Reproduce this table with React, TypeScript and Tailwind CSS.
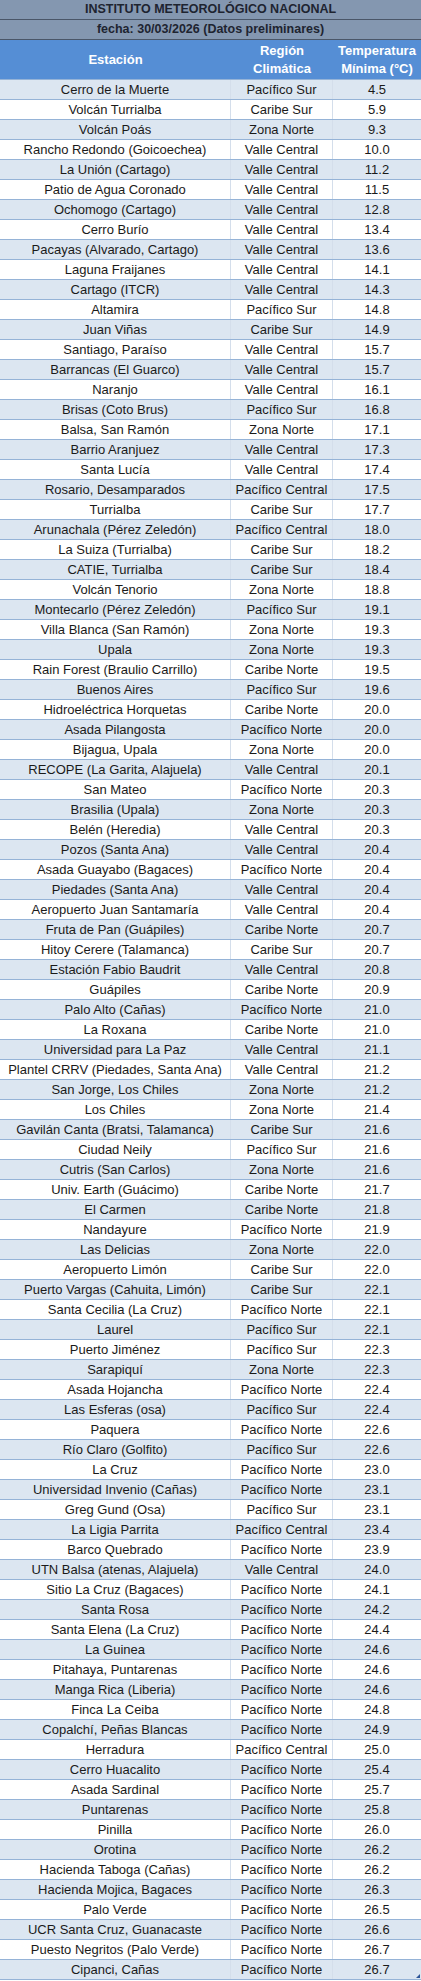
import React from "react";

const rows: [string, string, string][] = [
  ["Cerro de la Muerte", "Pacífico Sur", "4.5"],
  ["Volcán Turrialba", "Caribe Sur", "5.9"],
  ["Volcán Poás", "Zona Norte", "9.3"],
  ["Rancho Redondo (Goicoechea)", "Valle Central", "10.0"],
  ["La Unión (Cartago)", "Valle Central", "11.2"],
  ["Patio de Agua Coronado", "Valle Central", "11.5"],
  ["Ochomogo (Cartago)", "Valle Central", "12.8"],
  ["Cerro Burío", "Valle Central", "13.4"],
  ["Pacayas (Alvarado, Cartago)", "Valle Central", "13.6"],
  ["Laguna Fraijanes", "Valle Central", "14.1"],
  ["Cartago (ITCR)", "Valle Central", "14.3"],
  ["Altamira", "Pacífico Sur", "14.8"],
  ["Juan Viñas", "Caribe Sur", "14.9"],
  ["Santiago, Paraíso", "Valle Central", "15.7"],
  ["Barrancas (El Guarco)", "Valle Central", "15.7"],
  ["Naranjo", "Valle Central", "16.1"],
  ["Brisas (Coto Brus)", "Pacífico Sur", "16.8"],
  ["Balsa, San Ramón", "Zona Norte", "17.1"],
  ["Barrio Aranjuez", "Valle Central", "17.3"],
  ["Santa Lucía", "Valle Central", "17.4"],
  ["Rosario, Desamparados", "Pacífico Central", "17.5"],
  ["Turrialba", "Caribe Sur", "17.7"],
  ["Arunachala (Pérez Zeledón)", "Pacífico Central", "18.0"],
  ["La Suiza (Turrialba)", "Caribe Sur", "18.2"],
  ["CATIE, Turrialba", "Caribe Sur", "18.4"],
  ["Volcán Tenorio", "Zona Norte", "18.8"],
  ["Montecarlo (Pérez Zeledón)", "Pacífico Sur", "19.1"],
  ["Villa Blanca (San Ramón)", "Zona Norte", "19.3"],
  ["Upala", "Zona Norte", "19.3"],
  ["Rain Forest (Braulio Carrillo)", "Caribe Norte", "19.5"],
  ["Buenos Aires", "Pacífico Sur", "19.6"],
  ["Hidroeléctrica Horquetas", "Caribe Norte", "20.0"],
  ["Asada Pilangosta", "Pacífico Norte", "20.0"],
  ["Bijagua, Upala", "Zona Norte", "20.0"],
  ["RECOPE (La Garita, Alajuela)", "Valle Central", "20.1"],
  ["San Mateo", "Pacífico Norte", "20.3"],
  ["Brasilia (Upala)", "Zona Norte", "20.3"],
  ["Belén (Heredia)", "Valle Central", "20.3"],
  ["Pozos (Santa Ana)", "Valle Central", "20.4"],
  ["Asada Guayabo (Bagaces)", "Pacífico Norte", "20.4"],
  ["Piedades (Santa Ana)", "Valle Central", "20.4"],
  ["Aeropuerto Juan Santamaría", "Valle Central", "20.4"],
  ["Fruta de Pan (Guápiles)", "Caribe Norte", "20.7"],
  ["Hitoy Cerere (Talamanca)", "Caribe Sur", "20.7"],
  ["Estación Fabio Baudrit", "Valle Central", "20.8"],
  ["Guápiles", "Caribe Norte", "20.9"],
  ["Palo Alto (Cañas)", "Pacífico Norte", "21.0"],
  ["La Roxana", "Caribe Norte", "21.0"],
  ["Universidad para La Paz", "Valle Central", "21.1"],
  ["Plantel CRRV (Piedades, Santa Ana)", "Valle Central", "21.2"],
  ["San Jorge, Los Chiles", "Zona Norte", "21.2"],
  ["Los Chiles", "Zona Norte", "21.4"],
  ["Gavilán Canta (Bratsi, Talamanca)", "Caribe Sur", "21.6"],
  ["Ciudad Neily", "Pacífico Sur", "21.6"],
  ["Cutris (San Carlos)", "Zona Norte", "21.6"],
  ["Univ. Earth (Guácimo)", "Caribe Norte", "21.7"],
  ["El Carmen", "Caribe Norte", "21.8"],
  ["Nandayure", "Pacífico Norte", "21.9"],
  ["Las Delicias", "Zona Norte", "22.0"],
  ["Aeropuerto Limón", "Caribe Sur", "22.0"],
  ["Puerto Vargas (Cahuita, Limón)", "Caribe Sur", "22.1"],
  ["Santa Cecilia (La Cruz)", "Pacífico Norte", "22.1"],
  ["Laurel", "Pacífico Sur", "22.1"],
  ["Puerto Jiménez", "Pacífico Sur", "22.3"],
  ["Sarapiquí", "Zona Norte", "22.3"],
  ["Asada Hojancha", "Pacífico Norte", "22.4"],
  ["Las Esferas (osa)", "Pacífico Sur", "22.4"],
  ["Paquera", "Pacífico Norte", "22.6"],
  ["Río Claro (Golfito)", "Pacífico Sur", "22.6"],
  ["La Cruz", "Pacífico Norte", "23.0"],
  ["Universidad Invenio (Cañas)", "Pacífico Norte", "23.1"],
  ["Greg Gund (Osa)", "Pacífico Sur", "23.1"],
  ["La Ligia Parrita", "Pacífico Central", "23.4"],
  ["Barco Quebrado", "Pacífico Norte", "23.9"],
  ["UTN Balsa (atenas, Alajuela)", "Valle Central", "24.0"],
  ["Sitio La Cruz (Bagaces)", "Pacífico Norte", "24.1"],
  ["Santa Rosa", "Pacífico Norte", "24.2"],
  ["Santa Elena (La Cruz)", "Pacífico Norte", "24.4"],
  ["La Guinea", "Pacífico Norte", "24.6"],
  ["Pitahaya, Puntarenas", "Pacífico Norte", "24.6"],
  ["Manga Rica (Liberia)", "Pacífico Norte", "24.6"],
  ["Finca La Ceiba", "Pacífico Norte", "24.8"],
  ["Copalchí, Peñas Blancas", "Pacífico Norte", "24.9"],
  ["Herradura", "Pacífico Central", "25.0"],
  ["Cerro Huacalito", "Pacífico Norte", "25.4"],
  ["Asada Sardinal", "Pacífico Norte", "25.7"],
  ["Puntarenas", "Pacífico Norte", "25.8"],
  ["Pinilla", "Pacífico Norte", "26.0"],
  ["Orotina", "Pacífico Norte", "26.2"],
  ["Hacienda Taboga (Cañas)", "Pacífico Norte", "26.2"],
  ["Hacienda Mojica, Bagaces", "Pacífico Norte", "26.3"],
  ["Palo Verde", "Pacífico Norte", "26.5"],
  ["UCR Santa Cruz, Guanacaste", "Pacífico Norte", "26.6"],
  ["Puesto Negritos (Palo Verde)", "Pacífico Norte", "26.7"],
  ["Cipanci, Cañas", "Pacífico Norte", "26.7"],
];

export default function App() {
  return (
    <div
      className="relative w-[421px] bg-white text-[#1a1a1a] text-[13px] leading-none"
      style={{ fontFamily: '"Liberation Sans", Arial, sans-serif' }}
    >
      <div className="h-[20px] flex items-center justify-center bg-[#8497b0] border-b border-[#4a5668] font-bold text-[12.5px] text-[#1e2430]">
        INSTITUTO METEOROLÓGICO NACIONAL
      </div>
      <div className="h-[20px] flex items-center justify-center bg-[#8497b0] border-b border-[#4a5668] font-bold text-[12.5px] text-[#1e2430]">
        fecha: 30/03/2026 (Datos preliminares)
      </div>
      <div className="grid grid-cols-[231px_102px_88px] h-[40px] bg-[#558ed5] text-white font-bold border-b border-[#95b3d7]">
        <div className="flex items-center justify-center">Estación</div>
        <div className="flex flex-col items-center justify-center gap-[5px] text-center">
          <span>Región</span>
          <span>Climática</span>
        </div>
        <div className="flex flex-col items-center justify-center gap-[5px] text-center">
          <span>Temperatura</span>
          <span>Mínima (°C)</span>
        </div>
      </div>
      {rows.map(([s, r, t], i) => (
        <div
          key={i}
          className={
            "grid grid-cols-[231px_102px_88px] h-[20px] border-b border-[#95b3d7] " +
            (i % 2 === 0 ? "bg-[#dce6f1]" : "bg-white")
          }
        >
          <div className="flex items-center justify-center border-r border-[#d4deeb] whitespace-nowrap">{s}</div>
          <div className="flex items-center justify-center border-r border-[#d4deeb] whitespace-nowrap">{r}</div>
          <div className="flex items-center justify-center whitespace-nowrap">{t}</div>
        </div>
      ))}
      <div className="absolute right-[1px] bottom-[2px] w-0 h-0 border-l-[4px] border-l-transparent border-b-[4px] border-b-[#2f5597]" />
    </div>
  );
}
